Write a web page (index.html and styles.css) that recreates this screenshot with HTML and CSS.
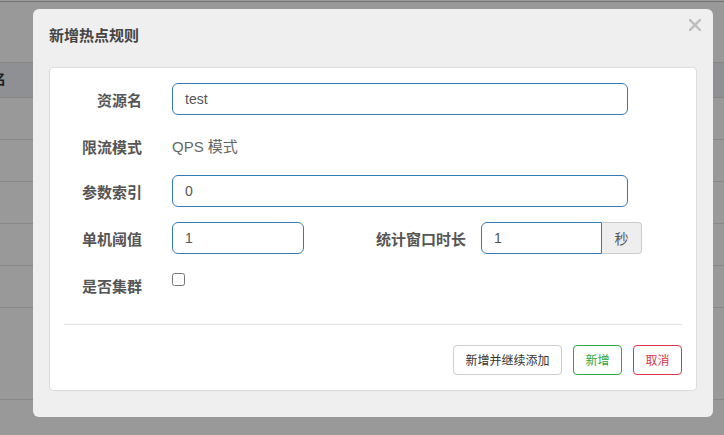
FILE: index.html
```html
<!DOCTYPE html>
<html lang="zh-CN">
<head>
<meta charset="utf-8">
<title>新增热点规则</title>
<link rel="stylesheet" href="styles.css">
</head>
<body>
<div class="page">
  <div class="toolbar"></div>
  <div class="table">
    <div class="trow thead"><span class="cut">资源名</span></div>
    <div class="trow"></div>
    <div class="trow"></div>
    <div class="trow"></div>
    <div class="trow"></div>
    <div class="trow"></div>
    <div class="trow tall"></div>
    <div class="trow end"></div>
  </div>
</div>
<div class="backdrop"></div>
<div class="modal">
  <div class="modal-header">
    <h4 class="modal-title">新增热点规则</h4>
    <button class="close" type="button" aria-label="关闭">
      <svg width="12" height="12" viewBox="0 0 12 12"><path d="M1 1 L11 11 M11 1 L1 11" stroke="#bdbdbd" stroke-width="2.4" stroke-linecap="square"/></svg>
    </button>
  </div>
  <div class="panel">
    <div class="form-row">
      <label class="label">资源名</label>
      <div class="field"><input class="input wide" type="text" value="test"></div>
    </div>
    <div class="form-row">
      <label class="label">限流模式</label>
      <div class="field"><p class="static">QPS 模式</p></div>
    </div>
    <div class="form-row">
      <label class="label">参数索引</label>
      <div class="field"><input class="input wide" type="text" value="0"></div>
    </div>
    <div class="form-row">
      <label class="label">单机阈值</label>
      <div class="field field-sm"><input class="input small" type="text" value="1"></div>
      <label class="label label-md">统计窗口时长</label>
      <div class="input-group">
        <input class="input grouped" type="text" value="1">
        <span class="addon">秒</span>
      </div>
    </div>
    <div class="form-row last">
      <label class="label">是否集群</label>
      <div class="field"><input class="check" type="checkbox"></div>
    </div>
    <hr class="divider">
    <div class="actions">
      <button class="btn btn-default" type="button">新增并继续添加</button>
      <button class="btn btn-success" type="button">新增</button>
      <button class="btn btn-danger" type="button">取消</button>
    </div>
  </div>
</div>
</body>
</html>
```

FILE: styles.css
```css
* { box-sizing: border-box; }
html, body { margin: 0; padding: 0; }
body {
  width: 724px;
  height: 435px;
  overflow: hidden;
  background: #fff;
  font-family: "Liberation Sans", "Noto Sans CJK SC", sans-serif;
  font-size: 14px;
  color: #333;
  position: relative;
}

/* background page */
.page { padding-top: 1px; }
.toolbar { height: 61px; border-top: 1px solid #c4c4c4; }
.trow { height: 42px; border-top: 1px solid #e2e2e2; }
.thead { height: 35px; background: #eef1f5; font-weight: bold; font-size: 14px; line-height: 33px; overflow: hidden; white-space: nowrap; }
.cut { margin-left: -36px; color: #333; }
.tall { height: 92px; }
.end { height: 40px; }

.backdrop {
  position: absolute;
  inset: 0;
  background: rgba(0, 0, 0, 0.4);
}

/* modal */
.modal {
  position: absolute;
  left: 33px;
  top: 9px;
  width: 680px;
  background: #efefef;
  border-radius: 6px;
  padding: 16px 16px 26px;
}
.modal-header { position: relative; margin-bottom: 22px; }
.modal-title {
  margin: 0;
  font-size: 15px;
  line-height: 20px;
  font-weight: bold;
  color: #444;
  font-family: "Noto Sans CJK SC", sans-serif;
}
.close {
  position: absolute;
  right: -4px;
  top: -6px;
  padding: 0;
  border: 0;
  background: none;
  width: 12px;
  height: 12px;
  line-height: 0;
}

.panel {
  background: #fff;
  border: 1px solid #dcdcdc;
  border-radius: 4px;
  padding: 15px 0 15px;
}

.form-row { display: flex; align-items: flex-start; margin-bottom: 15px; }
.form-row.last { margin-bottom: 0; height: 42px; }
.label {
  width: 107px;
  flex: none;
  padding-right: 15px;
  padding-top: 7px;
  text-align: right;
  font-family: "Noto Sans CJK SC", sans-serif;
  font-weight: bold;
  font-size: 15px;
  line-height: 20px;
  color: #555;
}
.label-md { width: 162px; }
.field { padding-left: 15px; }
.field-sm { width: 162px; flex: none; padding-right: 15px; }

.input {
  height: 32px;
  border: 1px solid #337ab7;
  border-radius: 6px;
  padding: 0 12px;
  font-family: "Liberation Sans", "Noto Sans CJK SC", sans-serif;
  font-size: 14px;
  color: #555;
  background: #fff;
  outline: none;
  display: block;
}
.wide { width: 456px; }
.small { width: 132px; }

.static {
  margin: 0;
  padding-top: 7px;
  min-height: 30px;
  font-size: 15px;
  line-height: 20px;
  color: #666;
  font-family: "Liberation Sans", "Noto Sans CJK SC", sans-serif;
}

.input-group { display: flex; }
.grouped { width: 121px; border-radius: 6px 0 0 6px; }
.addon {
  width: 40px;
  height: 32px;
  border: 1px solid #ccc;
  border-left: 0;
  border-radius: 0 4px 4px 0;
  background: #eee;
  color: #555;
  font-family: "Noto Sans CJK SC", sans-serif;
  font-size: 14px;
  line-height: 30px;
  text-align: center;
}

.check {
  margin: 4px 0 0 0;
  width: 13px;
  height: 13px;
  display: block;
}

.divider {
  margin: 13px 14px 20px;
  border: 0;
  border-top: 1px solid #e3e3e3;
  height: 0;
}

.actions {
  display: flex;
  justify-content: flex-end;
  gap: 11px;
  padding-right: 14px;
}
.btn {
  height: 30px;
  padding: 0 11.5px;
  border-radius: 4px;
  background: #fff;
  font-family: "Noto Sans CJK SC", sans-serif;
  font-size: 12px;
  line-height: 28px;
  cursor: pointer;
}
.btn-default { border: 1px solid #ccc; color: #333; }
.btn-success { border: 1px solid #28a745; color: #28a745; }
.btn-danger { border: 1px solid #dc3545; color: #dc3545; }
```
